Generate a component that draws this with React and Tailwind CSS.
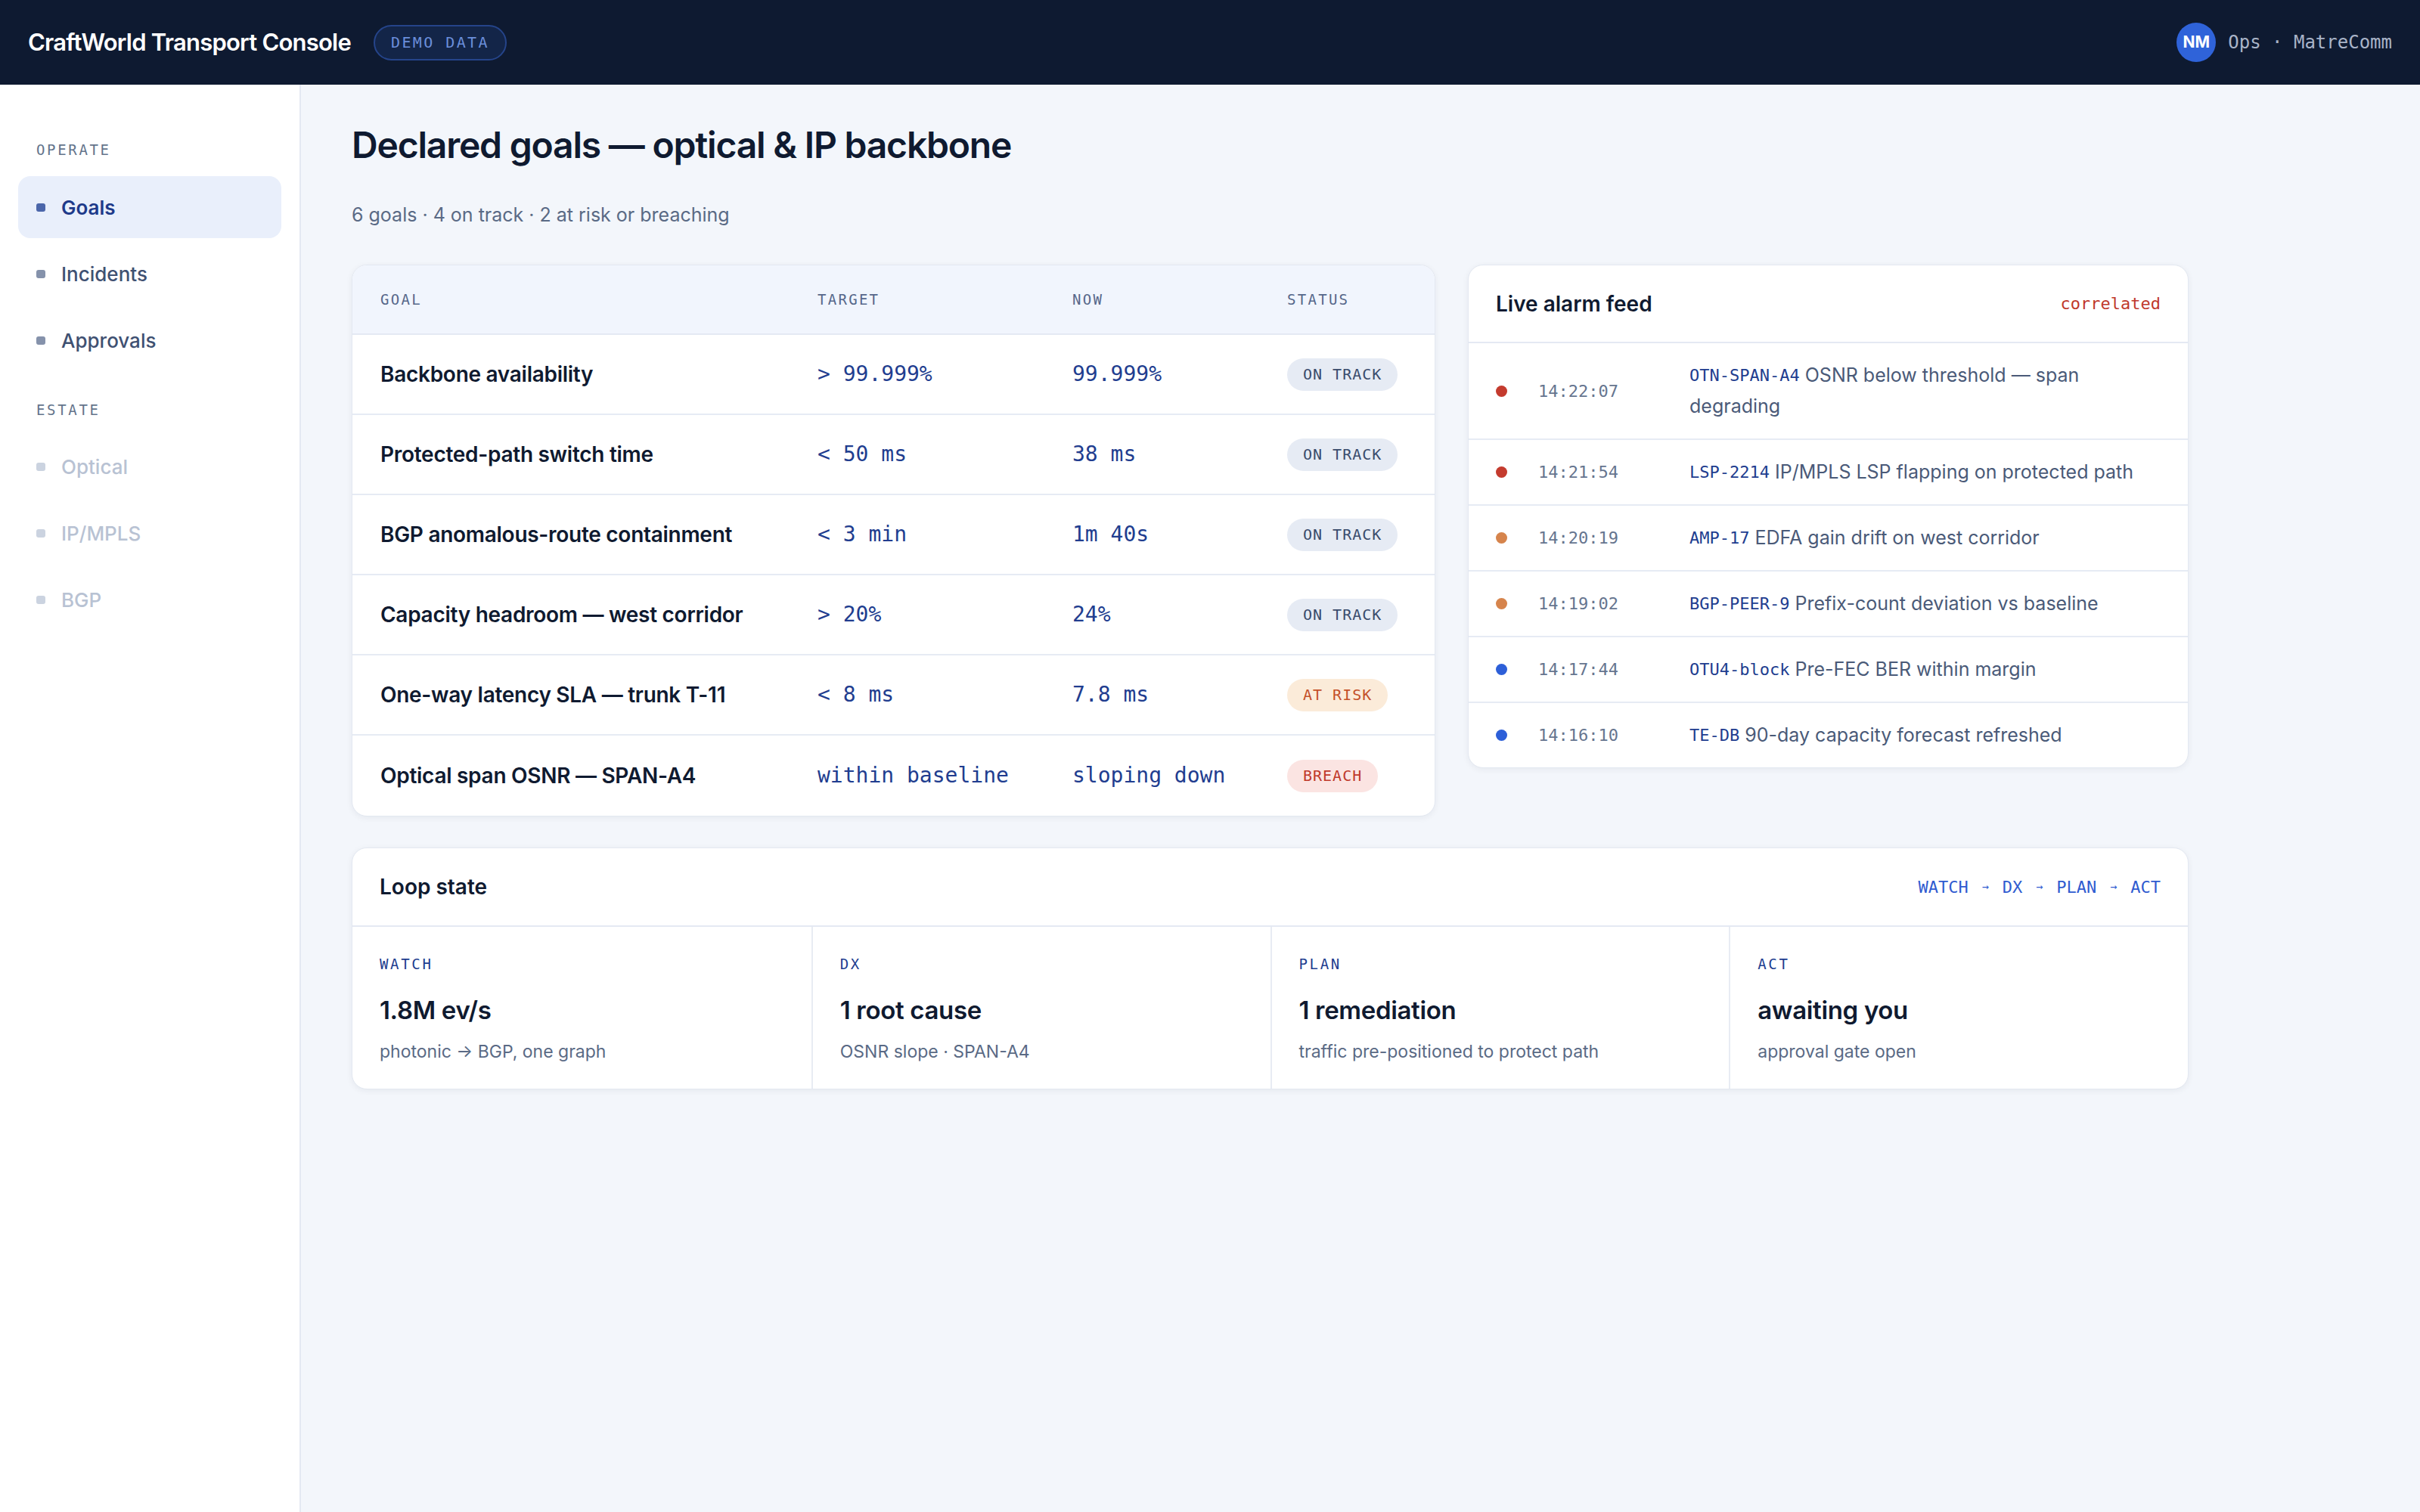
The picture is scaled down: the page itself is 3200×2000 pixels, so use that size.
import React from "react";

const MONO = "font-['DejaVu_Sans_Mono','Liberation_Mono',monospace]";
const SANS = "font-['Inter','Noto_Sans',sans-serif]";

// ─── data ─────────────────────────────────────────────────────────────────────
const goals = [
  { name: "Backbone availability", target: "> 99.999%", now: "99.999%", status: "ok" },
  { name: "Protected-path switch time", target: "< 50 ms", now: "38 ms", status: "ok" },
  { name: "BGP anomalous-route containment", target: "< 3 min", now: "1m 40s", status: "ok" },
  { name: "Capacity headroom — west corridor", target: "> 20%", now: "24%", status: "ok" },
  { name: "One-way latency SLA — trunk T-11", target: "< 8 ms", now: "7.8 ms", status: "risk" },
  { name: "Optical span OSNR — SPAN-A4", target: "within baseline", now: "sloping down", status: "breach" },
];

const alarms = [
  { sev: "red", time: "14:22:07", code: "OTN-SPAN-A4", text: "OSNR below threshold — span degrading" },
  { sev: "red", time: "14:21:54", code: "LSP-2214", text: "IP/MPLS LSP flapping on protected path" },
  { sev: "amber", time: "14:20:19", code: "AMP-17", text: "EDFA gain drift on west corridor" },
  { sev: "amber", time: "14:19:02", code: "BGP-PEER-9", text: "Prefix-count deviation vs baseline" },
  { sev: "blue", time: "14:17:44", code: "OTU4-block", text: "Pre-FEC BER within margin" },
  { sev: "blue", time: "14:16:10", code: "TE-DB", text: "90-day capacity forecast refreshed" },
];

const loop = [
  { label: "WATCH", value: "1.8M ev/s", sub: "photonic → BGP, one graph" },
  { label: "DX", value: "1 root cause", sub: "OSNR slope · SPAN-A4" },
  { label: "PLAN", value: "1 remediation", sub: "traffic pre-positioned to protect path" },
  { label: "ACT", value: "awaiting you", sub: "approval gate open" },
];

const dotColor = {
  red: "bg-[#c43b2e]",
  amber: "bg-[#d6844c]",
  blue: "bg-[#2d5fd8]",
};

// ─── small pieces ─────────────────────────────────────────────────────────────
const StatusPill = ({ status }) => {
  if (status === "risk") {
    return (
      <span className={`${MONO} inline-flex h-[43px] items-center rounded-full bg-[#fbebd9] px-[21px] text-[20px] tracking-wider text-[#c4512a]`}>
        AT RISK
      </span>
    );
  }
  if (status === "breach") {
    return (
      <span className={`${MONO} inline-flex h-[43px] items-center rounded-full bg-[#fbe4e2] px-[21px] text-[20px] tracking-wider text-[#c0392b]`}>
        BREACH
      </span>
    );
  }
  return (
    <span className={`${MONO} inline-flex h-[43px] items-center rounded-full bg-[#e6ebf4] px-[21px] text-[20px] tracking-wider text-[#3a4c6c]`}>
      ON TRACK
    </span>
  );
};

const NavItem = ({ label, active, disabled }) => {
  let box = "text-[#3f5172]";
  let dot = "bg-[#8592ab]";
  if (active) {
    box = "bg-[#e9effb] text-[#1e3a8a] font-semibold";
    dot = "bg-[#4b66aa]";
  } else if (disabled) {
    box = "text-[#b8c2d3]";
    dot = "bg-[#cbd3e0]";
  }
  return (
    <div className={`flex h-[82px] items-center gap-[21px] rounded-[16px] px-[24px] text-[26px] font-medium ${box}`}>
      <span className={`h-[11px] w-[12px] rounded-[3px] ${dot}`} />
      {label}
    </div>
  );
};

// ─── page ─────────────────────────────────────────────────────────────────────
export default function App() {
  return (
    <div className={`${SANS} flex min-h-screen flex-col bg-[#f3f6fb] text-[#0f1a30]`}>
      {/* top bar */}
      <header className="flex h-[112px] shrink-0 items-center justify-between bg-[#0e1a31] px-[37px]">
        <div className="flex items-center gap-[30px]">
          <span className="text-[31px] font-semibold tracking-tight text-white">CraftWorld Transport Console</span>
          <span className={`${MONO} flex h-[47px] items-center rounded-full border-2 border-[#25448a] bg-[#132548] px-[21px] text-[20px] tracking-[0.12em] text-[#6b8fdb]`}>
            DEMO DATA
          </span>
        </div>
        <div className="flex items-center gap-[16px]">
          <span className="flex h-[52px] w-[52px] items-center justify-center rounded-full bg-[#2f63d9] text-[21px] font-bold text-white">
            NM
          </span>
          <span className={`${MONO} text-[24px] text-[#a9b4c8]`}>Ops · MatreComm</span>
        </div>
      </header>

      <div className="flex flex-1">
        {/* sidebar */}
        <aside className="w-[398px] shrink-0 border-r-2 border-[#e4e9f2] bg-white px-[24px] pt-[72px]">
          <div className={`${MONO} px-[24px] text-[19px] leading-[28px] tracking-[0.14em] text-[#64748b]`}>OPERATE</div>
          <div className="mt-[21px] flex flex-col gap-[6px]">
            <NavItem label="Goals" active />
            <NavItem label="Incidents" />
            <NavItem label="Approvals" />
          </div>
          <div className={`${MONO} mt-[37px] px-[24px] text-[19px] leading-[28px] tracking-[0.14em] text-[#64748b]`}>ESTATE</div>
          <div className="mt-[20px] flex flex-col gap-[6px]">
            <NavItem label="Optical" disabled />
            <NavItem label="IP/MPLS" disabled />
            <NavItem label="BGP" disabled />
          </div>
        </aside>

        {/* main */}
        <main className="flex-1 pl-[67px] pt-[52px]">
          <div className="w-[2429px]">
            <h1 className="text-[48px] font-semibold leading-[56px] tracking-tight text-[#0f1a30]">
              Declared goals — optical &amp; IP backbone
            </h1>
            <p className="mt-[48px] text-[25px] leading-[32px] text-[#5a6a85]">
              6 goals · 4 on track · 2 at risk or breaching
            </p>

            <div className="mt-[50px] grid grid-cols-[1433px_1fr] items-start gap-[43px]">
              {/* goals table */}
              <div className="overflow-hidden rounded-[20px] border border-[#e3e8f1] bg-white shadow-[0_2px_8px_rgba(15,26,48,0.06)]">
                <div className={`${MONO} grid h-[92px] grid-cols-[578px_337px_284px_1fr] items-center border-b-2 border-[#e4e9f3] bg-[#f1f5fd] text-[19px] tracking-[0.12em] text-[#56678a]`}>
                  <div className="px-[37px]">GOAL</div>
                  <div className="px-[37px]">TARGET</div>
                  <div className="px-[37px]">NOW</div>
                  <div className="px-[37px]">STATUS</div>
                </div>
                {goals.map((g, i) => (
                  <div
                    key={g.name}
                    className={`grid h-[106px] grid-cols-[578px_337px_284px_1fr] items-center ${i < goals.length - 1 ? "border-b-2 border-[#e6ebf4]" : ""}`}
                  >
                    <div className="px-[37px] text-[28px] font-semibold tracking-[-0.01em] text-[#0f1a30]">{g.name}</div>
                    <div className={`${MONO} px-[37px] text-[28px] text-[#213d8f]`}>{g.target}</div>
                    <div className={`${MONO} px-[37px] text-[28px] text-[#213d8f]`}>{g.now}</div>
                    <div className="px-[37px]">
                      <StatusPill status={g.status} />
                    </div>
                  </div>
                ))}
              </div>

              {/* alarm feed */}
              <div className="overflow-hidden rounded-[20px] border border-[#e3e8f1] bg-white shadow-[0_2px_8px_rgba(15,26,48,0.06)]">
                <div className="flex h-[103px] items-center justify-between border-b-2 border-[#e4e9f3] px-[36px]">
                  <span className="text-[28px] font-semibold text-[#0f1a30]">Live alarm feed</span>
                  <span className={`${MONO} text-[22px] text-[#c0392b]`}>correlated</span>
                </div>
                {alarms.map((a, i) => (
                  <div
                    key={a.time}
                    className={`grid grid-cols-[56px_200px_1fr] items-center px-[36px] py-[22px] ${i < alarms.length - 1 ? "border-b-2 border-[#e6ebf4]" : ""}`}
                  >
                    <span className={`h-[15px] w-[15px] rounded-full ${dotColor[a.sev]}`} />
                    <span className={`${MONO} text-[22px] text-[#66758f]`}>{a.time}</span>
                    <p className="text-[25px] leading-[41px] text-[#4a5a78]">
                      <span className={`${MONO} align-top text-[22px] leading-[41px] text-[#213d8f]`}>{a.code}</span> {a.text}
                    </p>
                  </div>
                ))}
              </div>
            </div>

            {/* loop state */}
            <div className="mt-[41px] overflow-hidden rounded-[20px] border border-[#e3e8f1] bg-white shadow-[0_2px_8px_rgba(15,26,48,0.06)]">
              <div className="flex h-[104px] items-center justify-between border-b-2 border-[#e4e9f3] px-[36px]">
                <span className="text-[28px] font-semibold text-[#0f1a30]">Loop state</span>
                <div className={`${MONO} flex items-center gap-[18px] text-[22px] text-[#2f5bd0]`}>
                  <span>WATCH</span>
                  <span className="text-[15px]">→</span>
                  <span>DX</span>
                  <span className="text-[15px]">→</span>
                  <span>PLAN</span>
                  <span className="text-[15px]">→</span>
                  <span>ACT</span>
                </div>
              </div>
              <div className="grid grid-cols-4">
                {loop.map((l, i) => (
                  <div key={l.label} className={`px-[36px] pb-[33px] pt-[36px] ${i > 0 ? "border-l-2 border-[#e8ecf3]" : ""}`}>
                    <div className={`${MONO} text-[19px] leading-[26px] tracking-[0.14em] text-[#213d8f]`}>{l.label}</div>
                    <div className="mt-[28px] text-[33px] font-semibold leading-[40px] tracking-[-0.01em] text-[#0f1a30]">{l.value}</div>
                    <div className="mt-[19px] text-[23px] leading-[32px] text-[#5a6a85]">{l.sub}</div>
                  </div>
                ))}
              </div>
            </div>
          </div>
        </main>
      </div>
    </div>
  );
}
